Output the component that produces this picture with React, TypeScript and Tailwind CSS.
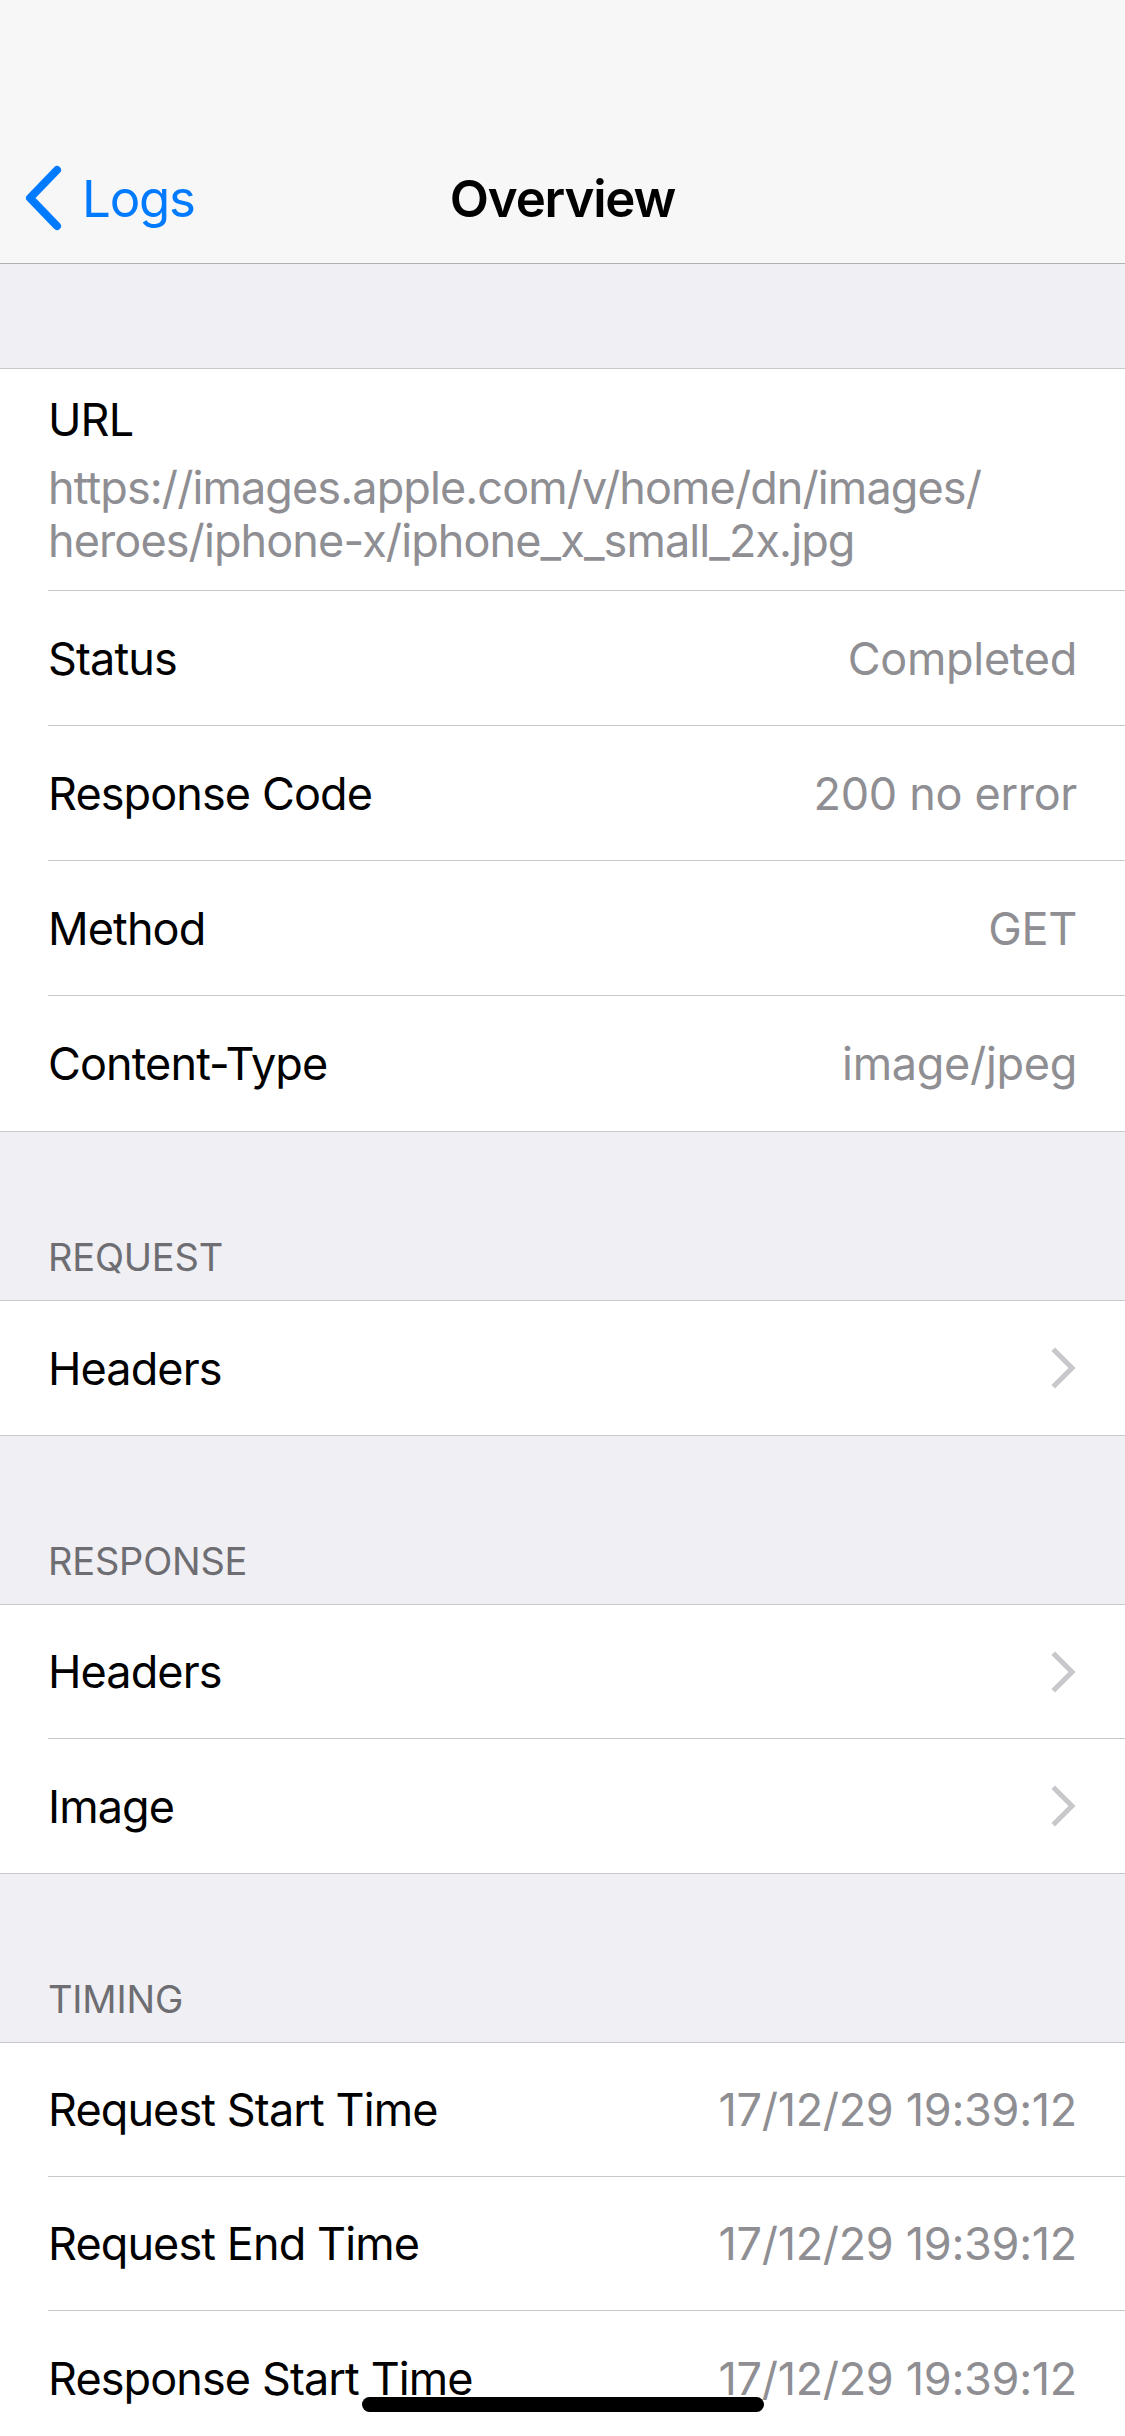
import React from "react";

const Chevron = () => (
  <svg width="26" height="42" viewBox="0 0 26 42" className="shrink-0">
    <path d="M4 4 L21 21 L4 38" fill="none" stroke="#c7c7cc" strokeWidth="5" strokeLinecap="square" />
  </svg>
);

const BackChevron = () => (
  <svg width="40" height="66" viewBox="0 0 40 66" className="shrink-0">
    <path d="M33 5 L6 33 L33 61" fill="none" stroke="#007aff" strokeWidth="8" strokeLinecap="round" strokeLinejoin="round" />
  </svg>
);

type RowProps = { label: string; value?: string; chevron?: boolean; last?: boolean; tall?: boolean };

const Row = ({ label, value, chevron, last, tall }: RowProps) => (
  <div className="pl-[48px]">
    <div
      className={`flex items-center justify-between pr-[48px] ${tall ? "h-[135px]" : "h-[134px]"} ${
        last ? "" : "border-b border-[#c8c7cc]"
      }`}
    >
      <span className="text-[45px] leading-none tracking-[-0.9px] text-black">{label}</span>
      {value && <span className="text-[45px] leading-none tracking-[-0.3px] text-[#8e8e93]">{value}</span>}
      {chevron && <Chevron />}
    </div>
  </div>
);

const Section = ({ children }: { children: React.ReactNode }) => (
  <div className="border-y border-[#c8c7cc] bg-white">{children}</div>
);

const Header = ({ title }: { title: string }) => (
  <div className="flex h-[168px] items-end px-[48px] pb-[24px]">
    <span className="text-[38px] leading-none tracking-[-0.2px] text-[#6d6d72]">{title}</span>
  </div>
);

export default function App() {
  return (
    <div
      className="relative h-[2436px] w-[1125px] overflow-hidden bg-[#efeff4]"
      style={{ fontFamily: "Inter, 'Noto Sans', sans-serif" }}
    >
      <div className="h-[264px] border-b border-[#b2b2b2] bg-[#f7f7f7] pt-[132px]">
        <div className="grid h-[132px] grid-cols-[1fr_auto_1fr] items-center">
          <div className="flex items-center pl-[24px]">
            <BackChevron />
            <span className="ml-[18px] text-[51px] leading-none tracking-[-1.2px] text-[#007aff]">Logs</span>
          </div>
          <span className="text-[51px] font-semibold leading-none tracking-[-1.2px] text-black">Overview</span>
          <div />
        </div>
      </div>

      <div className="h-[104px]" />

      <Section>
        <div className="pl-[48px]">
          <div className="h-[222px] border-b border-[#c8c7cc] pr-[48px] pt-[24px]">
            <div className="text-[45px] leading-[54px] tracking-[-0.9px] text-black">URL</div>
            <div className="mt-[14px] text-[45px] leading-[53px] tracking-[-0.9px] text-[#8e8e93]">
              https://images.apple.com/v/home/dn/images/
              <br />
              heroes/iphone-x/iphone_x_small_2x.jpg
            </div>
          </div>
        </div>
        <Row label="Status" value="Completed" tall />
        <Row label="Response Code" value="200 no error" tall />
        <Row label="Method" value="GET" tall />
        <Row label="Content-Type" value="image/jpeg" tall last />
      </Section>

      <Header title="REQUEST" />
      <Section>
        <Row label="Headers" chevron last />
      </Section>

      <Header title="RESPONSE" />
      <Section>
        <Row label="Headers" chevron />
        <Row label="Image" chevron last />
      </Section>

      <Header title="TIMING" />
      <Section>
        <Row label="Request Start Time" value="17/12/29 19:39:12" />
        <Row label="Request End Time" value="17/12/29 19:39:12" />
        <Row label="Response Start Time" value="17/12/29 19:39:12" last />
      </Section>

      <div className="absolute bottom-[24px] left-[362px] h-[15px] w-[402px] rounded-full bg-black" />
    </div>
  );
}
